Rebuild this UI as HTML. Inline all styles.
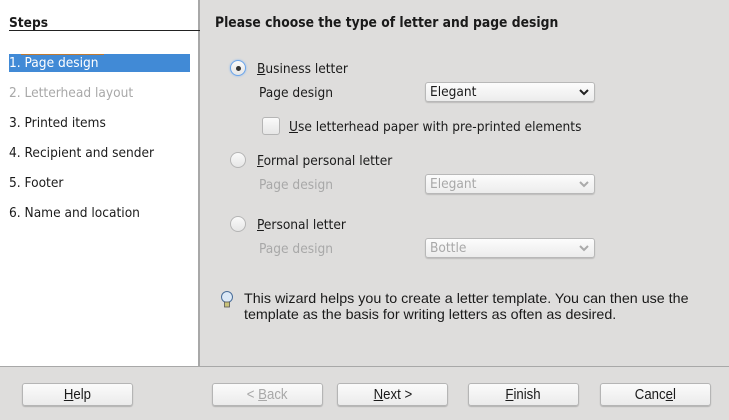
<!DOCTYPE html>
<html><head><style>
*{margin:0;padding:0;box-sizing:border-box}
body{width:729px;height:420px;background:#dedddc;font-family:"DejaVu Sans","Liberation Sans",sans-serif;font-stretch:condensed;font-size:13.6px;color:#1a1a1a;position:relative;overflow:hidden}
.a{position:absolute;white-space:nowrap}
#left{left:0;top:0;width:200px;height:367px;background:#fff;border-right:2px solid #a8a8a8}
.dis{color:#a8a8a8}
.radio{position:absolute;width:16px;height:16px;border-radius:50%;background:linear-gradient(#fafafa,#e6e6e6);border:1px solid #b5b5b5}
.dd{position:absolute;left:425px;width:170px;height:20px;border:1px solid #b8b8b8;border-radius:3px;background:linear-gradient(#fcfcfc,#ececec);padding:1px 0 0 4px;box-shadow:0 1px 1px rgba(0,0,0,.15)}
.dd svg{position:absolute;right:5px;top:6px}
.btn{position:absolute;top:383px;width:111px;height:23px;border:1px solid #b5b5b5;border-radius:3px;background:linear-gradient(#fbfbfb,#ebebeb);text-align:center;line-height:21px;font-family:"Liberation Sans",sans-serif;font-stretch:normal;font-size:15px;box-shadow:0 1px 1px rgba(0,0,0,.2)}
.btn span{display:inline-block;transform:scaleX(.88)}
u{text-decoration:underline}
</style></head><body>
<div class="a" id="left"></div>
<div class="a" style="left:9px;top:15px;font-weight:bold">Steps</div>
<div class="a" style="left:9px;top:30px;width:191px;height:1px;background:#222"></div>
<div class="a" style="left:9px;top:54px;width:181px;height:18px;background:#418ad6"></div>
<div class="a" style="left:21px;top:54px;width:83px;height:1px;background:#c07a30"></div>
<div class="a" style="left:9px;top:55px;color:#fff">1. Page design</div>
<div class="a dis" style="left:9px;top:85px">2. Letterhead layout</div>
<div class="a" style="left:9px;top:115px">3. Printed items</div>
<div class="a" style="left:9px;top:145px">4. Recipient and sender</div>
<div class="a" style="left:9px;top:175px">5. Footer</div>
<div class="a" style="left:9px;top:205px">6. Name and location</div>

<div class="a" style="left:215px;top:15px;font-weight:bold;font-size:13.75px">Please choose the type of letter and page design</div>

<div class="radio" style="left:230px;top:60px;border-color:#6aa4ea;box-shadow:0 0 2px #8ab8f0"><div style="position:absolute;left:5px;top:5px;width:5px;height:5px;border-radius:50%;background:#333"></div></div>
<div class="a" style="left:257px;top:61px"><u>B</u>usiness letter</div>
<div class="a" style="left:259px;top:85px">Page design</div>
<div class="dd" style="top:82px">Elegant<svg width="10" height="8"><path d="M1 1L5 5L9 1" stroke="#222" stroke-width="2" fill="none"/></svg></div>
<div class="a" style="left:262px;top:117px;width:18px;height:18px;border:1px solid #b5b5b5;border-radius:3px;background:linear-gradient(#fafafa,#e6e6e6)"></div>
<div class="a" style="left:289px;top:119px"><u>U</u>se letterhead paper with pre-printed elements</div>

<div class="radio" style="left:230px;top:152px"></div>
<div class="a" style="left:257px;top:153px"><u>F</u>ormal personal letter</div>
<div class="a dis" style="left:259px;top:177px">Page design</div>
<div class="dd dis" style="top:174px">Elegant<svg width="10" height="8"><path d="M1 1L5 5L9 1" stroke="#aaa" stroke-width="2" fill="none"/></svg></div>

<div class="radio" style="left:230px;top:216px"></div>
<div class="a" style="left:257px;top:217px"><u>P</u>ersonal letter</div>
<div class="a dis" style="left:259px;top:241px">Page design</div>
<div class="dd dis" style="top:238px">Bottle<svg width="10" height="8"><path d="M1 1L5 5L9 1" stroke="#aaa" stroke-width="2" fill="none"/></svg></div>

<svg class="a" style="left:220px;top:291px" width="14" height="18"><circle cx="7" cy="6" r="5.5" fill="#dce9f7" stroke="#4a6e9a"/><rect x="4.5" y="11" width="5" height="5" fill="#c9c27a" stroke="#555" stroke-width=".8"/></svg>
<div class="a" style="left:244px;top:290px;font-family:'Liberation Sans',sans-serif;font-stretch:normal;font-size:14px;line-height:16px;transform:scaleX(1.02);transform-origin:left">This wizard helps you to create a letter template. You can then use the<br>template as the basis for writing letters as often as desired.</div>

<div class="a" style="left:0;top:366px;width:729px;height:1px;background:#a8a8a8"></div>
<div class="btn" style="left:22px"><span><u>H</u>elp</span></div>
<div class="btn dis" style="left:212px"><span>&lt; <u>B</u>ack</span></div>
<div class="btn" style="left:337px"><span><u>N</u>ext &gt;</span></div>
<div class="btn" style="left:468px"><span><u>F</u>inish</span></div>
<div class="btn" style="left:600px"><span>Canc<u>e</u>l</span></div>
</body></html>
